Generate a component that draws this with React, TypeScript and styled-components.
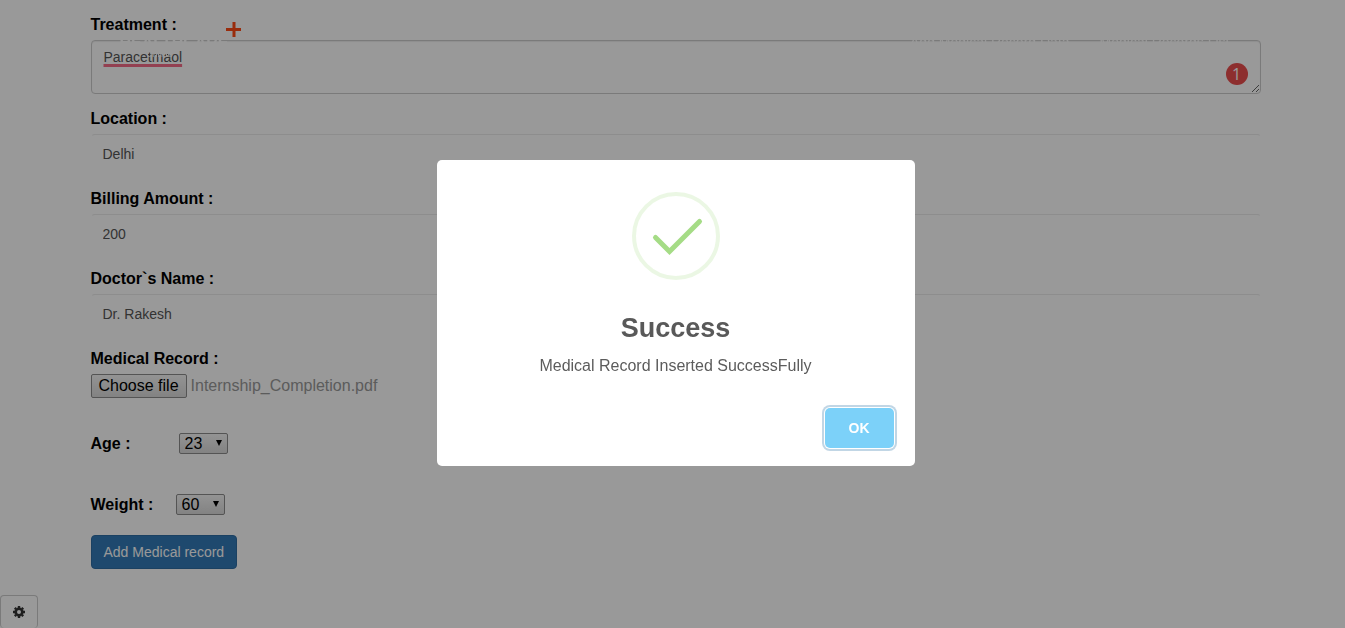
import React, { useRef, useState } from "react";
import styled, { createGlobalStyle } from "styled-components";

const GlobalStyle = createGlobalStyle`
  *, *::before, *::after { box-sizing: border-box; }
  body {
    margin: 0;
    background: #fff;
    color: #000;
    font-family: "Liberation Sans", Arial, sans-serif;
    font-size: 16px;
  }
  button, input, select, textarea { font-family: inherit; }
`;

const Page = styled.main`
  min-height: 100vh;
  padding: 14px 0 40px 6px;
`;

const Form = styled.form`
  width: 100%;
  max-width: 1170px;
  margin: 0 auto;
`;

const Field = styled.div`
  margin-bottom: 14px;
`;

const Label = styled.label<{ $width?: number }>`
  display: ${(p) => (p.$width ? "inline-block" : "block")};
  width: ${(p) => (p.$width ? `${p.$width}px` : "auto")};
  margin-bottom: ${(p) => (p.$width ? 0 : 4)}px;
  font-weight: 700;
  line-height: 22px;
`;

const TextInput = styled.input`
  display: block;
  width: 100%;
  height: 40px;
  padding: 6px 11px;
  border: 1px solid transparent;
  border-top-color: #ebebeb;
  border-radius: 4px;
  background: #fff;
  color: #555;
  font-size: 14px;
`;

const AreaWrap = styled.div`
  position: relative;
`;

const TextArea = styled.textarea`
  display: block;
  width: 100%;
  height: 54px;
  padding: 6px 12px;
  border: 1px solid #ccc;
  border-radius: 4px;
  background: #fff;
  box-shadow: inset 0 1px 1px rgba(0, 0, 0, 0.075);
  color: #555;
  font-size: 14px;
  line-height: 20px;
  text-decoration: underline 3px #f56c87;
  text-decoration-skip-ink: none;
  text-underline-offset: 2px;
`;

const IssueCount = styled.span`
  position: absolute;
  right: 13px;
  bottom: 9px;
  width: 22px;
  height: 22px;
  border-radius: 50%;
  background: #eb4d4d;
  color: #fff;
  font-family: "Open Sans", sans-serif;
  font-size: 16px;
  line-height: 22px;
  text-align: center;
`;

const FileRow = styled.div`
  display: flex;
  align-items: center;
  gap: 4px;
  height: 24px;
  color: #999;
`;

const HiddenFile = styled.input`
  display: none;
`;

const FileButton = styled.button`
  height: 24px;
  padding: 0 7px;
  border: 1px solid #8c8c8c;
  border-radius: 2px;
  background: linear-gradient(#f6f6f6, #dadada);
  color: #000;
  font-size: 16px;
  line-height: 20px;
`;

const SelectRow = styled.div<{ $top: number }>`
  display: flex;
  align-items: center;
  height: 21px;
  margin-top: ${(p) => p.$top}px;
`;

const SelectBox = styled.span`
  display: grid;
  align-items: center;
  width: 49px;
  > * { grid-area: 1 / 1; }
  > svg {
    justify-self: end;
    margin: 0 6px 2px 0;
    pointer-events: none;
  }
`;

const Select = styled.select`
  appearance: none;
  width: 100%;
  height: 21px;
  padding: 0 5px;
  border: 1px solid #8c8c8c;
  border-radius: 2px;
  background: linear-gradient(#f6f6f6, #dadada);
  color: #000;
  font-size: 16px;
  line-height: 18px;
`;

const SubmitButton = styled.button`
  height: 34px;
  margin-top: 20px;
  padding: 0 12px;
  border: 1px solid #2e6da4;
  border-radius: 4px;
  background: #337ab7;
  color: #fff;
  font-size: 14px;
  line-height: 20px;
`;

const Nav = styled.nav`
  position: fixed;
  inset: 0 0 auto 6px;
  z-index: 10;
  pointer-events: none;
`;

const NavInner = styled.div`
  display: flex;
  justify-content: space-between;
  width: 100%;
  max-width: 1170px;
  margin: 0 auto;
  padding: 22px 31px 0 29px;
`;

const Brand = styled.div`
  display: flex;
  align-items: flex-start;
  color: #fff;
  font-size: 16px;
  font-weight: 700;
  line-height: 16px;
  > span { width: 106px; padding-top: 13px; }
`;

const Tagline = styled.small`
  display: block;
  padding-left: 27px;
  font-size: 10px;
  font-weight: 400;
  line-height: 6px;
`;

const NavLinks = styled.div`
  display: flex;
  gap: 30px;
  padding-top: 12px;
`;

const NavLink = styled.a`
  color: #fff;
  font-size: 14px;
  line-height: 16px;
  text-decoration: none;
`;

const SettingsButton = styled.button`
  position: fixed;
  left: 0;
  bottom: 0;
  display: grid;
  place-items: center;
  width: 38px;
  height: 33px;
  padding: 0;
  border: 1px solid #ccc;
  border-bottom: 0;
  border-radius: 4px;
  background: #fff;
`;

const Overlay = styled.div`
  position: fixed;
  inset: 0;
  z-index: 20;
  display: grid;
  place-items: center;
  padding: 0 0 2px 6px;
  background: rgba(0, 0, 0, 0.4);
`;

const Modal = styled.section`
  width: 478px;
  max-width: calc(100% - 20px);
  padding-top: 32px;
  border-radius: 5px;
  background: #fff;
  text-align: center;
`;

const ModalIcon = styled.svg`
  display: block;
  margin: 0 auto;
`;

const ModalTitle = styled.h2`
  margin: 32px 0 0;
  color: #595959;
  font-size: 27px;
  line-height: 32px;
`;

const ModalText = styled.p`
  margin: 12px 0 0;
  color: #5c5c5c;
  line-height: 20px;
`;

const ModalFooter = styled.div`
  display: flex;
  justify-content: flex-end;
  padding: 32px 21px 18px;
`;

const OkButton = styled.button`
  width: 69px;
  height: 40px;
  border: 0;
  border-radius: 5px;
  outline: none;
  background: #7cd1f9;
  box-shadow: 0 0 0 1px #fff, 0 0 0 3px rgba(43, 114, 165, 0.29);
  color: #fff;
  font-size: 14px;
  font-weight: 700;
`;

function Dropdown({ id, value }: { id: string; value: string }) {
  return (
    <SelectBox>
      <Select id={id} defaultValue={value}>
        <option>{value}</option>
      </Select>
      <svg width="6" height="6" aria-hidden="true">
        <path d="M0 0h6L3 6z" fill="#000" />
      </svg>
    </SelectBox>
  );
}

const fields = [
  { id: "location", label: "Location :", value: "Delhi" },
  { id: "amount", label: "Billing Amount :", value: "200" },
  { id: "doctor", label: "Doctor`s Name :", value: "Dr. Rakesh" },
];

export default function App() {
  const fileRef = useRef<HTMLInputElement>(null);
  const [fileName, setFileName] = useState("Internship_Completion.pdf");
  const [open, setOpen] = useState(true);

  return (
    <>
      <GlobalStyle />
      <Nav>
        <NavInner>
          <Brand>
            <span>
              HEALTHCARE
              <Tagline>online</Tagline>
            </span>
            <svg width="16" height="16" aria-hidden="true">
              <path d="M8 0v15M0 7.5h15" stroke="#ff4a14" strokeWidth="3" />
            </svg>
          </Brand>
          <NavLinks>
            <NavLink href="#add">Add Medical Record Data</NavLink>
            <NavLink href="#records">Medical Records List</NavLink>
          </NavLinks>
        </NavInner>
      </Nav>
      <Page>
        <Form onSubmit={(e) => e.preventDefault()}>
          <Field>
            <Label htmlFor="treatment">Treatment :</Label>
            <AreaWrap>
              <TextArea id="treatment" spellCheck={false} defaultValue="Paracetmaol" />
              <IssueCount>1</IssueCount>
            </AreaWrap>
          </Field>
          {fields.map((f) => (
            <Field key={f.id}>
              <Label htmlFor={f.id}>{f.label}</Label>
              <TextInput id={f.id} defaultValue={f.value} />
            </Field>
          ))}
          <Label htmlFor="record">Medical Record :</Label>
          <FileRow>
            <HiddenFile
              id="record"
              type="file"
              ref={fileRef}
              onChange={(e) => setFileName(e.target.files?.[0]?.name ?? fileName)}
            />
            <FileButton type="button" onClick={() => fileRef.current?.click()}>
              Choose file
            </FileButton>
            <span>{fileName}</span>
          </FileRow>
          <SelectRow $top={35}>
            <Label htmlFor="age" $width={88}>Age :</Label>
            <Dropdown id="age" value="23" />
          </SelectRow>
          <SelectRow $top={40}>
            <Label htmlFor="weight" $width={85}>Weight :</Label>
            <Dropdown id="weight" value="60" />
          </SelectRow>
          <SubmitButton type="submit">Add Medical record</SubmitButton>
        </Form>
      </Page>
      <SettingsButton type="button" aria-label="Settings">
        <svg width="12" height="12" viewBox="-6 -6 12 12" aria-hidden="true">
          <circle r="3.3" fill="none" stroke="#333" strokeWidth="2.6" />
          <path
            d="M0-6v2M0 4v2M-6 0h2M4 0h2M-4.2-4.2l1.3 1.3M2.9 2.9l1.3 1.3M4.2-4.2L2.9-2.9M-2.9 2.9l-1.3 1.3"
            stroke="#333"
            strokeWidth="2.4"
          />
        </svg>
      </SettingsButton>
      {open && (
        <Overlay>
          <Modal role="dialog" aria-modal="true" aria-labelledby="dialog-title">
            <ModalIcon width="88" height="88" aria-hidden="true">
              <circle cx="44" cy="44" r="42" fill="none" stroke="#a5dc86" strokeOpacity="0.22" strokeWidth="4" />
              <path
                d="M23.5 45.5L37.5 59.5L67.5 29.5"
                fill="none"
                stroke="#a5dc86"
                strokeWidth="5"
                strokeLinecap="round"
              />
            </ModalIcon>
            <ModalTitle id="dialog-title">Success</ModalTitle>
            <ModalText>Medical Record Inserted SuccessFully</ModalText>
            <ModalFooter>
              <OkButton type="button" onClick={() => setOpen(false)}>OK</OkButton>
            </ModalFooter>
          </Modal>
        </Overlay>
      )}
    </>
  );
}
